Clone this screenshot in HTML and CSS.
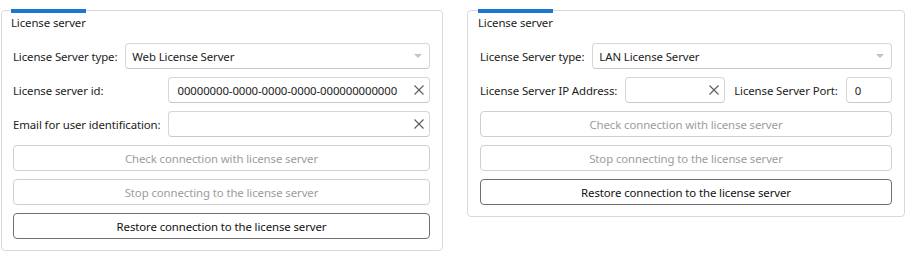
FILE: index.html
```html
<!DOCTYPE html>
<html lang="en">

<head>
  <meta charset="UTF-8">
  <title>License server settings</title>
  <link rel="stylesheet" href="styles.css">
</head>

<body>
  <div class="panels">
    <!-- web license server -->
    <div class="group group-web">
      <div class="group-title">License server</div>
      <div class="row">
        <span class="label">License Server type:</span>
        <div class="combo">
          <span class="combo-text">Web License Server</span>
          <svg class="combo-arrow" width="8" height="4" viewBox="0 0 8 4"><path d="M0 0H8L4 4Z" fill="#c4c4c4"/></svg>
        </div>
      </div>
      <div class="form-grid">
        <span class="label">License server id:</span>
        <div class="textbox">
          <span class="textbox-text">00000000-0000-0000-0000-000000000000</span>
          <svg class="clear" width="10" height="10" viewBox="0 0 10 10"><path d="M0.5 0.5L9.5 9.5M9.5 0.5L0.5 9.5" stroke="#5c5c5c" stroke-width="1.1"/></svg>
        </div>
        <span class="label">Email for user identification:</span>
        <div class="textbox">
          <span class="textbox-text"></span>
          <svg class="clear" width="10" height="10" viewBox="0 0 10 10"><path d="M0.5 0.5L9.5 9.5M9.5 0.5L0.5 9.5" stroke="#5c5c5c" stroke-width="1.1"/></svg>
        </div>
      </div>
      <button class="btn" disabled>Check connection with license server</button>
      <button class="btn" disabled>Stop connecting to the license server</button>
      <button class="btn">Restore connection to the license server</button>
    </div>

    <!-- LAN license server -->
    <div class="group group-lan">
      <div class="group-title">License server</div>
      <div class="row">
        <span class="label">License Server type:</span>
        <div class="combo">
          <span class="combo-text">LAN License Server</span>
          <svg class="combo-arrow" width="8" height="4" viewBox="0 0 8 4"><path d="M0 0H8L4 4Z" fill="#c4c4c4"/></svg>
        </div>
      </div>
      <div class="row">
        <span class="label">License Server IP Address:</span>
        <div class="textbox textbox-ip">
          <span class="textbox-text"></span>
          <svg class="clear" width="10" height="10" viewBox="0 0 10 10"><path d="M0.5 0.5L9.5 9.5M9.5 0.5L0.5 9.5" stroke="#5c5c5c" stroke-width="1.1"/></svg>
        </div>
        <span class="label label-port">License Server Port:</span>
        <div class="textbox">
          <span class="textbox-text">0</span>
        </div>
      </div>
      <button class="btn" disabled>Check connection with license server</button>
      <button class="btn" disabled>Stop connecting to the license server</button>
      <button class="btn">Restore connection to the license server</button>
    </div>
  </div>
</body>

</html>
```

FILE: styles.css
```css
* {
  box-sizing: border-box;
  margin: 0;
  padding: 0;
  font-family: 'Noto Sans', 'Open Sans', sans-serif;
}

body {
  background: #ffffff;
  color: #1b1b1b;
  font-size: 11.4px;
  letter-spacing: -0.1px;
}

.panels {
  display: flex;
  align-items: flex-start;
  gap: 24px;
  padding: 10px 0 0 1px;
}

.group {
  border: 1px solid #d9d9d9;
  border-radius: 4px;
  padding: 0 12px 11px 11px;
  display: flex;
  flex-direction: column;
  gap: 8px;
}

.group-web {
  width: 442px;
}

.group-lan {
  width: 438px;
  padding-left: 12px;
}

.group-title {
  align-self: flex-start;
  border-top: 4px solid #1976d2;
  margin: -2px 0 4px -2px;
  padding-top: 2px;
  line-height: 16px;
  color: #1b1b1b;
}

.row {
  display: flex;
  align-items: center;
  gap: 8px;
  height: 26px;
}

.form-grid {
  display: grid;
  grid-template-columns: auto minmax(0, 1fr);
  grid-auto-rows: 26px;
  align-items: center;
  column-gap: 8px;
  row-gap: 8px;
}

.label {
  white-space: nowrap;
}

.label-port {
  margin-left: 1px;
}

.combo,
.textbox {
  flex: 1;
  min-width: 0;
  height: 26px;
  border: 1px solid #d6d6d6;
  border-bottom-color: #c8c8c8;
  border-radius: 4px;
  display: flex;
  align-items: center;
  background: #ffffff;
}

.combo {
  padding: 0 6px;
}

.combo-text,
.textbox-text {
  flex: 1;
  min-width: 0;
  white-space: nowrap;
  overflow: hidden;
  color: #1b1b1b;
}

.combo-arrow {
  margin-right: 1px;
}

.textbox {
  padding: 0 5px 0 8px;
}

.textbox-ip {
  flex: none;
  width: 100px;
}

.clear {
  flex: none;
  margin-left: 4px;
}

.btn {
  height: 26px;
  border: 1px solid #cfcfcf;
  border-radius: 4px;
  background: #ffffff;
  font-size: 11.4px;
  letter-spacing: -0.1px;
  color: #9c9c9c;
}

.btn:enabled {
  border-color: #6f6f6f;
  color: #111111;
}
```
